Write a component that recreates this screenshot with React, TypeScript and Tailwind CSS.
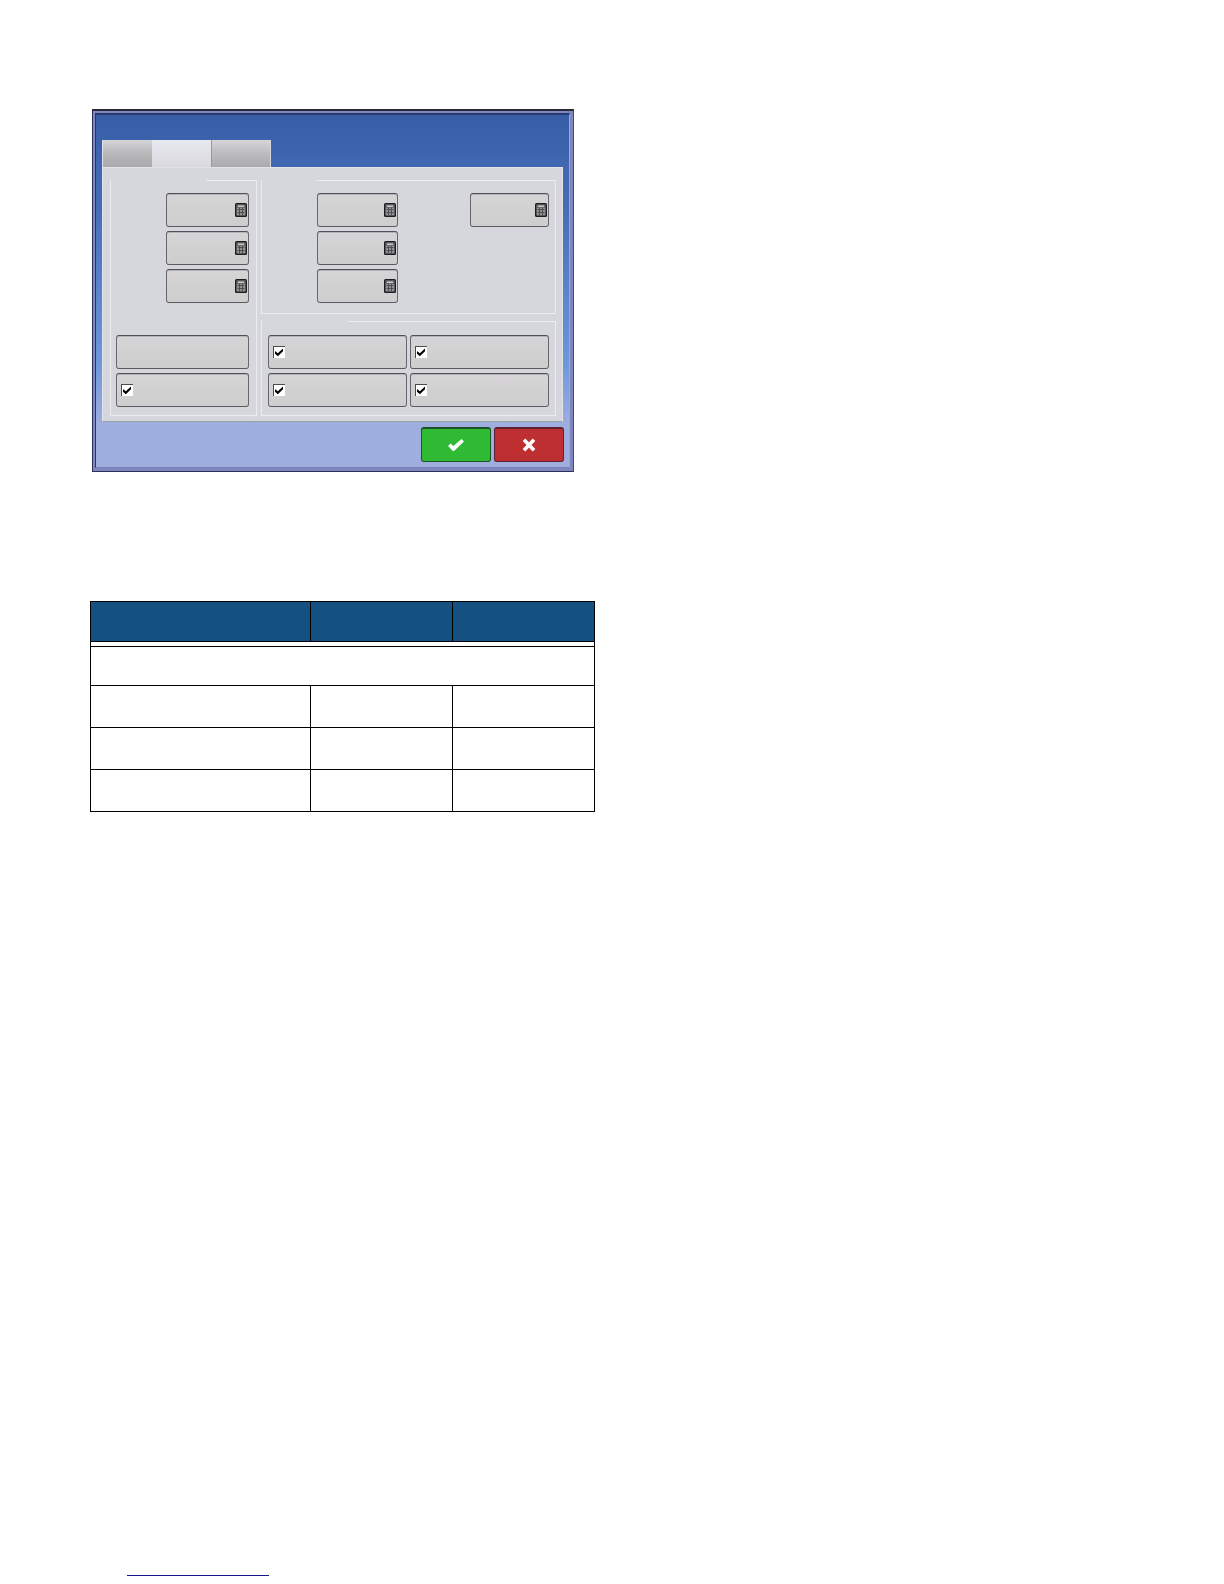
import { useState } from "react";

const CalculatorIcon = () => (
  <svg width="12" height="14" viewBox="0 0 12 14" aria-hidden="true">
    <rect x="0" y="0" width="12" height="14" rx="1.5" fill="#1d1d1f" />
    <rect x="1.5" y="1.5" width="9" height="11" fill="#939395" />
    <rect x="2" y="2" width="8" height="3" fill="#666668" />
    <rect x="3" y="2.5" width="6" height="1.5" fill="#c8c8c8" />
    <path d="M2.5 6.5h7M2.5 9.5h7M4.5 5v7M7.5 5v7" stroke="#4e4e50" strokeWidth="1" />
  </svg>
);

const bevel =
  "h-[34px] rounded-[3px] border border-[#66666c] border-t-[#505056] border-b-[#5a5a60] bg-gradient-to-b from-[#d6d4d6] to-[#cecece] shadow-[inset_0_1px_0_#b4b3b7]";

const NumberButton = ({ label, className }: { label: string; className: string }) => (
  <button type="button" aria-label={label} className={`${bevel} flex items-center justify-end pr-px ${className}`}>
    <CalculatorIcon />
  </button>
);

const CheckButton = ({ label }: { label: string }) => {
  const [checked, setChecked] = useState(true);

  return (
    <label className={`${bevel} flex items-center pl-1`}>
      <span className="grid">
        <input
          type="checkbox"
          aria-label={label}
          checked={checked}
          onChange={(e) => setChecked(e.target.checked)}
          className="col-start-1 row-start-1 size-3 appearance-none border-t border-l border-[#4b4b4b] bg-white"
        />
        {checked && (
          <svg viewBox="0 0 12 12" className="pointer-events-none col-start-1 row-start-1 size-3" aria-hidden="true">
            <path d="M2 5 4.8 7.2 10 2.4V5.2L4.8 10.2 2 7.8Z" fill="#000" />
          </svg>
        )}
      </span>
    </label>
  );
};

const group = "min-w-0 border border-[#ececf0]";

const SettingsDialog = () => (
  <div
    role="dialog"
    aria-label="Settings"
    className="ml-[2px] w-full max-w-[482px] border border-t-2 border-[#2b3058] border-t-[#2a2935] border-r-[#3c4a80] bg-[#7f86bf] p-[2px] pr-[3px] pb-[3px]"
  >
    <div className="border border-t-2 border-[#7583b4] border-t-[#263a70] border-r-[#97a8da] border-l-[#27386c] bg-[linear-gradient(#365da6_0%,#4267b3_15%,#456bb5_25%,#6c97d9_70%,#9eaedf_88%)] pt-[25px]">
      {/* Tabs */}
      <div role="tablist" className="flex h-[27px] pl-[6px]">
        <button role="tab" aria-label="First tab" aria-selected="false" className="w-[50px] border-l border-[#e0e0e4] bg-gradient-to-b from-[#d6d6da] via-[#b8b8bb] to-[#aaaaad]" />
        <button role="tab" aria-label="Second tab" aria-selected="true" className="w-[59px] bg-gradient-to-b from-[#e8e8f0] to-[#d9d9de]" />
        <button role="tab" aria-label="Third tab" aria-selected="false" className="w-[60px] border-r border-l border-[#98989c] border-r-[#d8d8dc] bg-gradient-to-b from-[#d6d6da] via-[#bcbcbf] to-[#aaaaad]" />
      </div>

      {/* Tab panel */}
      <div role="tabpanel" className="mr-[6px] ml-[6px] flex gap-1 border border-[#e3e3e7] border-b-[#9a9fac] bg-[#d6d7dc] pt-3 pr-[6px] pb-[5px] pl-[7px]">
        <fieldset className={`${group} w-[147px] pt-3 pr-[7px] pb-2 pl-[5px]`}>
          <legend aria-label="Values" className="-ml-[5px] h-px w-[95px]" />
          <div className="flex flex-col items-end gap-1">
            <NumberButton label="Value 1" className="w-[83px]" />
            <NumberButton label="Value 2" className="w-[83px]" />
            <NumberButton label="Value 3" className="w-[83px]" />
          </div>
          <div className="mt-8 flex flex-col gap-1">
            <button type="button" aria-label="Select" className={bevel} />
            <CheckButton label="Option" />
          </div>
        </fieldset>

        <div className="flex min-w-0 flex-1 flex-col gap-[7px]">
          <fieldset className={`${group} pt-3 pr-[6px] pb-[10px] pl-[55px]`}>
            <legend aria-label="Limits" className="-ml-[55px] h-px w-[54px]" />
            <div className="flex items-start justify-between">
              <div className="flex flex-col gap-1">
                <NumberButton label="Limit 1" className="w-[81px]" />
                <NumberButton label="Limit 2" className="w-[81px]" />
                <NumberButton label="Limit 3" className="w-[81px]" />
              </div>
              <NumberButton label="Limit 4" className="w-[79px]" />
            </div>
          </fieldset>

          <fieldset className={`${group} pt-[13px] pr-[6px] pb-2 pl-[6px]`}>
            <legend aria-label="Options" className="-ml-[6px] h-px w-[86px]" />
            <div className="grid grid-cols-2 gap-x-[3px] gap-y-1">
              <CheckButton label="Option 1" />
              <CheckButton label="Option 2" />
              <CheckButton label="Option 3" />
              <CheckButton label="Option 4" />
            </div>
          </fieldset>
        </div>
      </div>

      {/* Actions */}
      <div className="flex justify-end gap-[3px] pt-[5px] pr-[5px] pb-[5px]">
        <button aria-label="Accept" className="flex h-[35px] w-[70px] items-center justify-center rounded-[3px] border border-t-2 border-[#1c5328] bg-[#30b933]">
          <svg width="18" height="14" viewBox="0 0 18 14" aria-hidden="true">
            <path d="M1 8 3.5 5.5 6.5 8 14.5 1 17 3.4 7 13H6Z" fill="#fff" />
          </svg>
        </button>
        <button aria-label="Cancel" className="flex h-[35px] w-[70px] items-center justify-center rounded-[3px] border border-t-2 border-[#5e2132] bg-[#bd2f30]">
          <svg width="14" height="14" viewBox="0 0 14 14" aria-hidden="true">
            <path d="M2 1.8l10 10.4M12 1.8l-10 10.4" stroke="#fff" strokeWidth="3.6" />
          </svg>
        </button>
      </div>
    </div>
  </div>
);

const DataTable = () => (
  <table className="mt-[129px] w-full max-w-[505px] table-fixed border-collapse border border-black">
    <colgroup>
      <col className="w-[220px]" />
      <col className="w-[142px]" />
      <col className="w-[142px]" />
    </colgroup>
    <thead>
      <tr className="h-10 bg-[#145182]">
        <th className="border border-black p-0" />
        <th className="border border-black p-0" />
        <th className="border border-black p-0" />
      </tr>
    </thead>
    <tbody>
      <tr className="h-[5px]">
        <td colSpan={3} className="border border-black p-0" />
      </tr>
      <tr className="h-[39px]">
        <td colSpan={3} className="border border-black p-0" />
      </tr>
      {[0, 1, 2].map((row) => (
        <tr key={row} className="h-[42px]">
          <td className="border border-black p-0" />
          <td className="border border-black p-0" />
          <td className="border border-black p-0" />
        </tr>
      ))}
    </tbody>
  </table>
);

export default function App() {
  return (
    <div className="flex min-h-screen flex-col bg-white px-[90px] pt-[109px] pb-2 font-['Liberation_Sans',sans-serif]">
      <main>
        <SettingsDialog />
        <DataTable />
      </main>
      <footer className="mt-auto flex pl-[37px]">
        <a href="#top" aria-label="Website" className="h-4 w-[142px] border-b border-[#16168a]" />
      </footer>
    </div>
  );
}
